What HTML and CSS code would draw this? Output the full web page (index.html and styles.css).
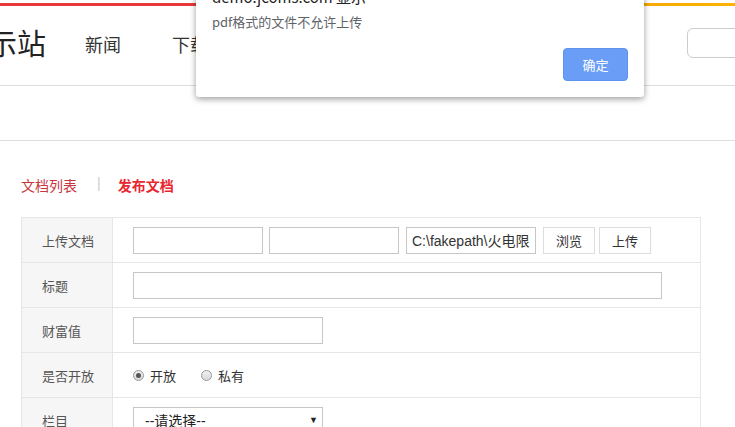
FILE: index.html
```html
<!DOCTYPE html>
<html lang="zh-CN">
<head>
    <meta charset="UTF-8">
    <title>发布文档</title>
    <link rel="stylesheet" href="styles.css">
</head>
<body>
    <div class="topline"></div>
    <!-- header -->
    <div class="header">
        <div class="logo">演示站</div>
        <ul class="nav">
            <li>新闻</li>
            <li>下载</li>
            <li>文档</li>
            <li>问答</li>
        </ul>
        <div class="search"></div>
    </div>
    <div class="subbar"></div>

    <div class="main">
        <div class="tabs">
            <span class="tab">文档列表</span>
            <span class="sep">|</span>
            <span class="tab active">发布文档</span>
        </div>

        <table class="form-table">
            <tr>
                <td class="label">上传文档</td>
                <td>
                    <div class="row">
                        <input class="ipt short" type="text">
                        <input class="ipt short" type="text">
                        <input class="ipt short path" type="text" value="C:\fakepath\火电限额设计参考造价指标.pdf">
                        <button class="btn browse">浏览</button>
                        <button class="btn">上传</button>
                    </div>
                </td>
            </tr>
            <tr>
                <td class="label">标题</td>
                <td><input class="ipt long" type="text"></td>
            </tr>
            <tr>
                <td class="label">财富值</td>
                <td><input class="ipt mid" type="text"></td>
            </tr>
            <tr>
                <td class="label">是否开放</td>
                <td>
                    <div class="row radios">
                        <span class="radio checked"></span><span class="rtext">开放</span>
                        <span class="radio"></span><span class="rtext">私有</span>
                    </div>
                </td>
            </tr>
            <tr>
                <td class="label">栏目</td>
                <td>
                    <div class="select">
                        <span>--请选择--</span>
                        <span class="arrow">▼</span>
                    </div>
                </td>
            </tr>
        </table>
    </div>

    <!-- browser alert -->
    <div class="dialog">
        <div class="dialog-title">demo.jcoms.com 显示</div>
        <div class="dialog-msg">pdf格式的文件不允许上传</div>
        <div class="dialog-foot">
            <button class="ok">确定</button>
        </div>
    </div>
</body>
</html>
```

FILE: styles.css
```css
body {
    margin: 0;
    padding-top: 3px;
    font-family: "Liberation Sans", "Noto Sans CJK SC", sans-serif;
    color: #333;
    background: #fff;
    overflow: hidden;
    position: relative;
    height: 427px;
}

.topline {
    height: 3px;
    background: linear-gradient(to right, #e8383d 0%, #e8383d 60%, #f6a700 85%, #fbb400 100%);
}

.header {
    height: 79px;
    border-bottom: 1px solid #ddd;
    display: flex;
    align-items: center;
    margin-left: -41px;
}

.logo {
    font-size: 29px;
    color: #222;
    width: 126px;
    margin-top: -8px;
}

.nav {
    list-style: none;
    margin: 0;
    padding: 0;
    display: flex;
    gap: 51px;
    font-size: 18px;
    color: #333;
    margin-top: -3px;
}

.search {
    margin-left: auto;
    width: 80px;
    height: 28px;
    border: 1px solid #ccc;
    border-radius: 6px;
    margin-right: -34px;
    margin-top: -6px;
}

.subbar {
    height: 54px;
    border-bottom: 1px solid #ddd;
}

.main {
    padding-left: 21px;
}

.tabs {
    padding-top: 34px;
    height: 42px;
    font-size: 14px;
    display: flex;
    align-items: flex-start;
}

.tab {
    color: #c8363d;
}

.tab.active {
    color: #e8262f;
    font-weight: bold;
}

.sep {
    color: #ccc;
    margin: 0 17px 0 20px;
}

.form-table {
    width: 680px;
    border-collapse: collapse;
    font-size: 13px;
}

.form-table td {
    border: 1px solid #e6e6e6;
    height: 45px;
    padding: 0 0 0 20px;
    box-sizing: border-box;
}

.form-table td.label {
    width: 91px;
    background: #f6f6f6;
    color: #555;
}

.row {
    display: flex;
    align-items: center;
}

.ipt {
    height: 27px;
    box-sizing: border-box;
    border: 1px solid #c6c6c6;
    margin: 0;
    padding: 0 5px;
    font-family: inherit;
    font-size: 14px;
    color: #333;
    display: block;
}

.ipt.short {
    width: 130px;
    margin-right: 6px;
}

.ipt.path {
    margin-left: 1px;
    margin-right: 7px;
}

.ipt.long {
    width: 529px;
}

.ipt.mid {
    width: 190px;
}

.btn {
    height: 27px;
    padding: 0 12px;
    border: 1px solid #ddd;
    background: #fff;
    color: #333;
    font-family: inherit;
    font-size: 13px;
    margin: 0 4px 0 0;
}

.browse {
    width: 52px;
}

.radios {
    font-size: 13px;
    color: #333;
}

.radio {
    width: 11px;
    height: 11px;
    border-radius: 50%;
    border: 1px solid #9a9a9a;
    background: linear-gradient(#f0f0f0, #d8d8d8);
    box-sizing: border-box;
    position: relative;
    margin-right: 6px;
}

.radio.checked::after {
    content: "";
    position: absolute;
    left: 2px;
    top: 2px;
    width: 5px;
    height: 5px;
    border-radius: 50%;
    background: #555;
}

.rtext {
    margin-right: 25px;
}

.select {
    width: 190px;
    height: 27px;
    box-sizing: border-box;
    border: 1px solid #c6c6c6;
    display: flex;
    align-items: center;
    justify-content: space-between;
    padding: 0 4px 0 11px;
    font-size: 14px;
    color: #222;
}

.arrow {
    font-size: 9px;
    color: #222;
}

/* alert box */
.dialog {
    position: absolute;
    left: 196px;
    top: -22px;
    width: 448px;
    height: 119px;
    background: #fff;
    border-radius: 0 0 3px 3px;
    box-shadow: 0 2px 6px rgba(0, 0, 0, 0.4);
    box-sizing: border-box;
    padding: 9px 16px 0 16px;
    font-family: "Noto Sans CJK SC", sans-serif;
}

.dialog-title {
    font-size: 15px;
    color: #222;
    line-height: 20px;
    height: 20px;
}

.dialog-msg {
    margin-top: 5px;
    font-size: 13px;
    color: #5f6368;
    line-height: 20px;
}

.dialog-foot {
    display: flex;
    justify-content: flex-end;
    margin-top: 16px;
}

.ok {
    width: 65px;
    height: 33px;
    background: #6a9ef6;
    border: 1px solid #5d93ef;
    border-radius: 4px;
    color: #fff;
    font-family: inherit;
    font-size: 13px;
}
```
